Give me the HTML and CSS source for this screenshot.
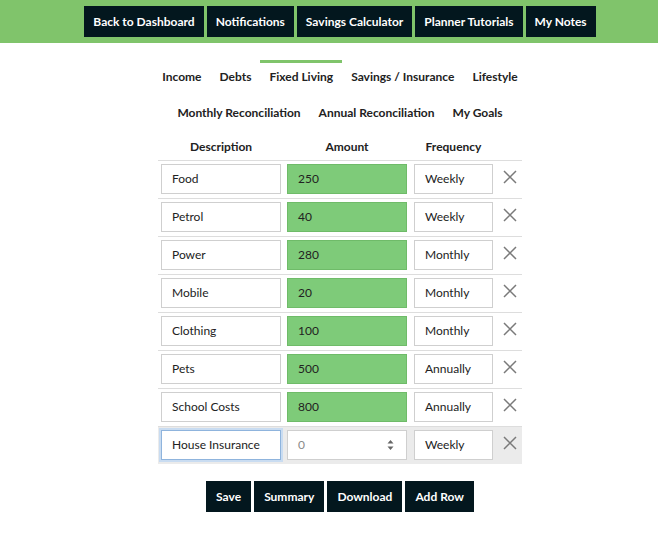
FILE: index.html
```html
<!DOCTYPE html>
<html lang="en">
<head>
<meta charset="utf-8">
<title>Fixed Living</title>
<link rel="stylesheet" href="styles.css">
</head>
<body>
<header class="topbar">
  <nav class="topnav">
    <a class="btn" href="#">Back to Dashboard</a>
    <a class="btn" href="#">Notifications</a>
    <a class="btn" href="#">Savings Calculator</a>
    <a class="btn" href="#">Planner Tutorials</a>
    <a class="btn" href="#">My Notes</a>
  </nav>
</header>
<main class="planner">
  <ul class="tabs">
    <li class="tab">Income</li>
    <li class="tab">Debts</li>
    <li class="tab active">Fixed Living</li>
    <li class="tab">Savings / Insurance</li>
    <li class="tab">Lifestyle</li>
  </ul>
  <ul class="tabs">
    <li class="tab">Monthly Reconciliation</li>
    <li class="tab">Annual Reconciliation</li>
    <li class="tab">My Goals</li>
  </ul>
  <table class="budget">
    <thead>
      <tr>
        <th class="c-desc">Description</th>
        <th class="c-amt">Amount</th>
        <th class="c-freq">Frequency</th>
        <th class="c-del"></th>
      </tr>
    </thead>
    <tbody>
      <tr>
        <td class="c-desc"><div class="field">Food</div></td>
        <td class="c-amt"><div class="field filled">250</div></td>
        <td class="c-freq"><div class="field">Weekly</div></td>
        <td class="c-del"><svg class="del" viewBox="0 0 14 14"><path d="M1 1L13 13M13 1L1 13"/></svg></td>
      </tr>
      <tr>
        <td class="c-desc"><div class="field">Petrol</div></td>
        <td class="c-amt"><div class="field filled">40</div></td>
        <td class="c-freq"><div class="field">Weekly</div></td>
        <td class="c-del"><svg class="del" viewBox="0 0 14 14"><path d="M1 1L13 13M13 1L1 13"/></svg></td>
      </tr>
      <tr>
        <td class="c-desc"><div class="field">Power</div></td>
        <td class="c-amt"><div class="field filled">280</div></td>
        <td class="c-freq"><div class="field">Monthly</div></td>
        <td class="c-del"><svg class="del" viewBox="0 0 14 14"><path d="M1 1L13 13M13 1L1 13"/></svg></td>
      </tr>
      <tr>
        <td class="c-desc"><div class="field">Mobile</div></td>
        <td class="c-amt"><div class="field filled">20</div></td>
        <td class="c-freq"><div class="field">Monthly</div></td>
        <td class="c-del"><svg class="del" viewBox="0 0 14 14"><path d="M1 1L13 13M13 1L1 13"/></svg></td>
      </tr>
      <tr>
        <td class="c-desc"><div class="field">Clothing</div></td>
        <td class="c-amt"><div class="field filled">100</div></td>
        <td class="c-freq"><div class="field">Monthly</div></td>
        <td class="c-del"><svg class="del" viewBox="0 0 14 14"><path d="M1 1L13 13M13 1L1 13"/></svg></td>
      </tr>
      <tr>
        <td class="c-desc"><div class="field">Pets</div></td>
        <td class="c-amt"><div class="field filled">500</div></td>
        <td class="c-freq"><div class="field">Annually</div></td>
        <td class="c-del"><svg class="del" viewBox="0 0 14 14"><path d="M1 1L13 13M13 1L1 13"/></svg></td>
      </tr>
      <tr>
        <td class="c-desc"><div class="field">School Costs</div></td>
        <td class="c-amt"><div class="field filled">800</div></td>
        <td class="c-freq"><div class="field">Annually</div></td>
        <td class="c-del"><svg class="del" viewBox="0 0 14 14"><path d="M1 1L13 13M13 1L1 13"/></svg></td>
      </tr>
      <tr class="new-row">
        <td class="c-desc"><div class="field focused">House Insurance</div></td>
        <td class="c-amt"><div class="field number"><span class="placeholder">0</span><svg class="spin" viewBox="0 0 7 12"><path d="M3.5 1L6.5 4.5H0.5Z M3.5 11L6.5 7.5H0.5Z"/></svg></div></td>
        <td class="c-freq"><div class="field">Weekly</div></td>
        <td class="c-del"><svg class="del" viewBox="0 0 14 14"><path d="M1 1L13 13M13 1L1 13"/></svg></td>
      </tr>
    </tbody>
  </table>
  <div class="actions">
    <button class="btn" type="button">Save</button>
    <button class="btn" type="button">Summary</button>
    <button class="btn" type="button">Download</button>
    <button class="btn" type="button">Add Row</button>
  </div>
</main>
</body>
</html>
```
FILE: styles.css
```css
* { box-sizing: border-box; }

body {
  margin: 0;
  font-family: Lato, "Open Sans", sans-serif;
  font-size: 12px;
  color: #222;
  background: #fff;
}

.topbar {
  background: #80c46b;
  padding: 6px 0 6px 22px;
}

.topnav {
  display: flex;
  justify-content: center;
  gap: 3px;
}

.btn {
  display: inline-flex;
  align-items: center;
  height: 31px;
  padding: 0 10px;
  background: #03171e;
  color: #fff;
  font-family: Lato, "Open Sans", sans-serif;
  font-size: 12px;
  font-weight: 700;
  text-decoration: none;
  border: 0;
  border-radius: 0;
  cursor: pointer;
}

.topnav .btn {
  padding: 0 9px;
}

.planner {
  padding: 17px 0 0 22px;
}

.tabs {
  display: flex;
  justify-content: center;
  list-style: none;
  margin: 0;
  padding: 0;
}

.tab {
  padding: 0 9px 5px;
  border-top: 3px solid transparent;
  line-height: 28px;
  font-weight: 700;
  color: #222;
}

.tab.active {
  border-top-color: #80c46b;
}

.budget {
  width: 364px;
  margin: 0 auto;
  border-collapse: collapse;
}

.budget th {
  height: 28px;
  padding: 2px 0 0;
  font-weight: 700;
  text-align: center;
  vertical-align: middle;
}

.budget td {
  border-top: 1px solid #ddd;
  padding: 3px 3px 4px;
  vertical-align: top;
}

.c-desc { width: 126px; }
.c-amt { width: 126px; }
.c-freq { width: 87px; }
.c-del { width: 25px; }

.budget td.c-freq { padding-left: 4px; padding-right: 4px; }
.budget td.c-del { padding: 9px 0 0 6px; }

.field {
  height: 30px;
  line-height: 28px;
  padding: 0 10px;
  border: 1px solid #cfcfcf;
  background: #fff;
  color: #222;
  white-space: nowrap;
  overflow: hidden;
}

.field.filled {
  background: #7ecb79;
  border-color: #6fbb69;
}

.field.focused {
  border-color: #8fb4dd;
  box-shadow: 0 0 0 2px #c9dcf1;
}

.field.number {
  display: flex;
  align-items: center;
  justify-content: space-between;
  padding-right: 12px;
}

.placeholder { color: #8a8a8a; }

.spin {
  width: 7px;
  height: 12px;
  fill: #666;
}

.new-row td { background: #ebebeb; }

.del {
  display: block;
  width: 14px;
  height: 14px;
  fill: none;
  stroke: #7a7a7a;
  stroke-width: 1.5;
}

.actions {
  display: flex;
  justify-content: center;
  gap: 3px;
  margin-top: 17px;
}
```
